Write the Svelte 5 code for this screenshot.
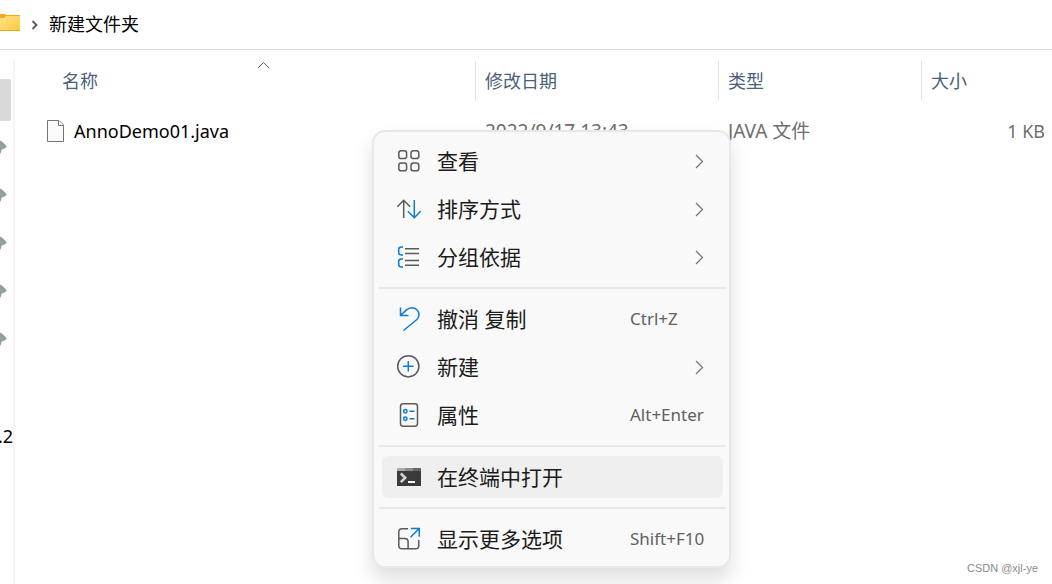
<script>
  let folder = "新建文件夹";
  let pins = [1, 2, 3, 4, 5];

  let files = [
    {
      name: "AnnoDemo01.java",
      modified: "2022/9/17 13:43",
      type: "JAVA 文件",
      size: "1 KB",
    },
  ];

  let groups = [
    [
      { icon: "view", label: "查看", sub: true },
      { icon: "sort", label: "排序方式", sub: true },
      { icon: "group", label: "分组依据", sub: true },
    ],
    [
      { icon: "undo", label: "撤消 复制", keys: "Ctrl+Z" },
      { icon: "new", label: "新建", sub: true },
      { icon: "props", label: "属性", keys: "Alt+Enter" },
    ],
    [{ icon: "terminal", label: "在终端中打开" }],
    [{ icon: "more", label: "显示更多选项", keys: "Shift+F10" }],
  ];

  let active = "terminal";
</script>

<div class="explorer">
  <header>
    <svg class="folder" width="20" height="18" viewBox="0 0 20 18">
      <defs>
        <linearGradient id="folder" x1="0" y1="0" x2="1" y2="1">
          <stop offset="0" stop-color="#ffe08a" />
          <stop offset="1" stop-color="#ffc93c" />
        </linearGradient>
      </defs>
      <path d="M0 0h4.500q1 0 1.500 1h14v5H0z" fill="#f3ae13" />
      <path d="M0 4h4l2-2h14v15H0z" fill="url(#folder)" />
      <path d="M0 16.500h20" stroke="#eaa820" />
    </svg>
    <svg class="crumb" width="8" height="10" viewBox="0 0 8 10">
      <path d="M1.500 1l4 4-4 4" fill="none" stroke="#5c5c5c" stroke-width="1.900" />
    </svg>
    <a href="#folder">{folder}</a>
  </header>

  <div class="content">
    <aside>
      <div class="thumb"></div>
      {#each pins as pin (pin)}
        <svg class="pin" width="8" height="16" viewBox="0 0 8 16">
          <path d="M0 1.500L2 2.500 6.500 7Q7 8.500 5.500 9L3 10 1.500 11 1 13.500 0 15z" fill="#929da4" />
        </svg>
      {/each}
      <span>.2</span>
    </aside>

    <main>
      <table>
        <colgroup>
          <col />
          <col class="date" />
          <col class="type" />
          <col class="size" />
        </colgroup>
        <thead>
          <tr>
            <th>
              <svg class="caret" width="13" height="8" viewBox="0 0 13 8">
                <path d="M1 7l5.500-5.500L12 7" fill="none" stroke="#666" />
              </svg>
              名称
            </th>
            <th>修改日期</th>
            <th>类型</th>
            <th>大小</th>
          </tr>
        </thead>
        <tbody>
          {#each files as file (file.name)}
            <tr>
              <td>
                <div class="file">
                  <svg width="17" height="22" viewBox="0 0 17 22">
                    <path d="M.5.5h11.500l4.500 4.500v16.500H.5z" fill="#fafafa" stroke="#757575" />
                    <path d="M11.500.5v5h5" fill="#fff" stroke="#757575" />
                  </svg>
                  {file.name}
                </div>
              </td>
              <td class="info">{file.modified}</td>
              <td class="info">{file.type}</td>
              <td>{file.size}</td>
            </tr>
          {/each}
        </tbody>
      </table>
    </main>
  </div>

  <div class="menu" role="menu">
    {#each groups as group, i}
      {#if i > 0}
        <hr />
      {/if}
      {#each group as item (item.icon)}
        <button role="menuitem" class:active={item.icon === active}>
          <svg class="icon" width="26" height="26" viewBox="0 0 26 26">
            {#if item.icon === "view"}
              <rect x="2.800" y="2.800" width="7.800" height="7.800" rx="2.400" />
              <rect x="15" y="2.800" width="7.800" height="7.800" rx="2.400" />
              <rect x="2.800" y="15" width="7.800" height="7.800" rx="2.400" />
              <rect x="15" y="15" width="7.800" height="7.800" rx="2.400" />
            {:else if item.icon === "sort"}
              <path d="M7.700 22V4.500M1.300 10.800l6.400-6.500 6.400 6.500" />
              <path class="blue" d="M18.300 4v17.500M11.900 15.200l6.400 6.500 6.400-6.500" />
            {:else if item.icon === "group"}
              <path d="M9 4.700h14M9 9.500h14M9 16.500h14M9 21.300h14" />
              <path class="blue" d="M7 3H5.500Q2.700 3 2.700 5.500v3Q2.700 11 5.500 11H7M7 15H5.500Q2.700 15 2.700 17.500v3Q2.700 23 5.500 23H7" />
            {:else if item.icon === "undo"}
              <path class="blue" d="M4.500 1.500v8h8M4.800 9.200l5.400-5.100c3.800-3.500 8.300-2.800 10.700-.4 2.900 2.900 2.900 6.900 0 9.800L7.500 24.500" />
            {:else if item.icon === "new"}
              <circle cx="12.300" cy="12.300" r="10.600" />
              <path class="blue" d="M12.300 7v10.600M7 12.300h10.600" />
            {:else if item.icon === "props"}
              <rect x="4.500" y="1.800" width="17" height="22.400" rx="2.600" />
              <circle class="blue" cx="9.300" cy="9.300" r="1.700" />
              <circle class="blue" cx="9.300" cy="16.700" r="1.700" />
              <path class="blue" d="M13.500 9.300h5M13.500 16.700h5" />
            {:else if item.icon === "terminal"}
              <path d="M1 4h24v18H1z" fill="#3b3b3b" stroke="none" />
              <path d="M1 4h8v3H1z" fill="#aaa" stroke="none" />
              <path d="M9 4h8v3H9z" fill="#8b8b8b" stroke="none" />
              <path d="M17 4h8v3h-8z" fill="#666" stroke="none" />
              <path d="M4.800 9.500l4.400 4.300-4.400 4.400" stroke="#d4d4d4" stroke-width="2.600" />
              <path d="M12 18h7" stroke="#fff" stroke-width="2" />
            {:else if item.icon === "more"}
              <path d="M12 2.800H6Q2.800 2.800 2.800 6v13.500q0 3.300 3.300 3.300h13.500q3.200 0 3.200-3.300V14" />
              <path d="M2.800 12.500h6q3.300 0 3.300 3.300v7" />
              <path class="blue" d="M15 2.500h8.300v8.300M23 2.800l-8.500 8.500" />
            {/if}
          </svg>
          <span class="label">{item.label}</span>
          {#if item.keys}
            <kbd>{item.keys}</kbd>
          {/if}
          {#if item.sub}
            <svg class="arrow" width="9" height="15" viewBox="0 0 9 15">
              <path d="M1 1l6.500 6.500L1 14" fill="none" stroke="#777" stroke-width="1.300" />
            </svg>
          {/if}
        </button>
      {/each}
    {/each}
  </div>

  <small>CSDN @xjl-ye</small>
</div>

<style>
  :global(body) {
    margin: 0;
    background: #fff;
  }

  .explorer {
    position: relative;
    display: flex;
    flex-direction: column;
    min-height: 100vh;
    overflow: hidden;
    font-family: "Noto Sans", "Noto Sans CJK SC", sans-serif;
    font-size: 18px;
    line-height: 24px;
    color: #000;
  }

  header {
    display: flex;
    align-items: center;
    height: 49px;
    border-bottom: 1px solid #d9d9d9;
  }

  .folder {
    margin-bottom: 3px;
  }

  .crumb {
    margin: 0 10px 0 11px;
  }

  header a {
    padding-bottom: 2px;
    color: inherit;
    text-decoration: none;
  }

  .content {
    display: flex;
    flex: 1;
    padding-top: 11px;
  }

  aside {
    display: flex;
    flex-direction: column;
    box-sizing: border-box;
    width: 15px;
    border-right: 2px solid #f5f5f5;
  }

  .thumb {
    width: 11px;
    height: 42px;
    margin: 18px 0;
    border-radius: 0 2px 2px 0;
    background: #d9d9d9;
  }

  .pin {
    margin-bottom: 32px;
  }

  aside span {
    align-self: flex-end;
    margin-top: 45px;
  }

  main {
    flex: 1;
    margin-left: 38px;
  }

  table {
    width: 100%;
    table-layout: fixed;
    border-collapse: separate;
    border-spacing: 0;
  }

  .date {
    width: 243px;
  }

  .type {
    width: 203px;
  }

  .size {
    width: 131px;
  }

  th {
    position: relative;
    box-sizing: border-box;
    height: 40px;
    padding: 0 9px;
    border-left: 1px solid #e3e3e3;
    font-weight: 400;
    text-align: left;
    color: #4c607a;
  }

  th:first-child {
    border-left: 0;
  }

  .caret {
    position: absolute;
    top: 0;
    left: calc(50% - 7px);
  }

  td {
    height: 60px;
    padding: 0 10px;
    color: #6d6d6d;
  }

  td:first-child {
    padding: 0;
    color: #000;
  }

  td:last-child {
    padding-right: 7px;
    text-align: right;
  }

  .info {
    font-size: 19px;
  }

  .file {
    display: flex;
    align-items: center;
    gap: 10px;
    margin-left: -6px;
  }

  .menu {
    position: absolute;
    top: 130px;
    left: 372px;
    display: flex;
    flex-direction: column;
    box-sizing: border-box;
    width: 359px;
    padding: 5px 3px 3px 5px;
    border: 2px solid #e8e8e8;
    border-radius: 13px;
    background: #f9f9f9;
    box-shadow: 0 12px 20px rgba(0, 0, 0, 0.13);
  }

  .menu button {
    display: flex;
    align-items: center;
    height: 42px;
    margin: 3px;
    padding: 0 14px;
    border: 0;
    border-radius: 6px;
    background: none;
    font: inherit;
    font-size: 21px;
    color: #1b1b1b;
  }

  .menu button.active {
    background: #efefef;
  }

  .menu hr {
    width: 100%;
    height: 2px;
    margin: 6px 0;
    border: 0;
    background: #e8e8e8;
  }

  .icon {
    margin-right: 15px;
    fill: none;
    stroke: #5a5a5a;
    stroke-width: 1.500;
  }

  .icon .blue {
    stroke: #0c7bd3;
  }

  .label {
    flex: 1;
    text-align: left;
  }

  kbd {
    width: 79px;
    font-family: inherit;
    font-size: 17px;
    text-align: left;
    color: #606060;
    white-space: nowrap;
  }

  .arrow {
    margin-right: 5px;
  }

  small {
    position: absolute;
    right: 14px;
    bottom: 8px;
    font-family: "Liberation Sans", sans-serif;
    font-size: 11px;
    line-height: 16px;
    color: #8a8a8a;
  }
</style>
